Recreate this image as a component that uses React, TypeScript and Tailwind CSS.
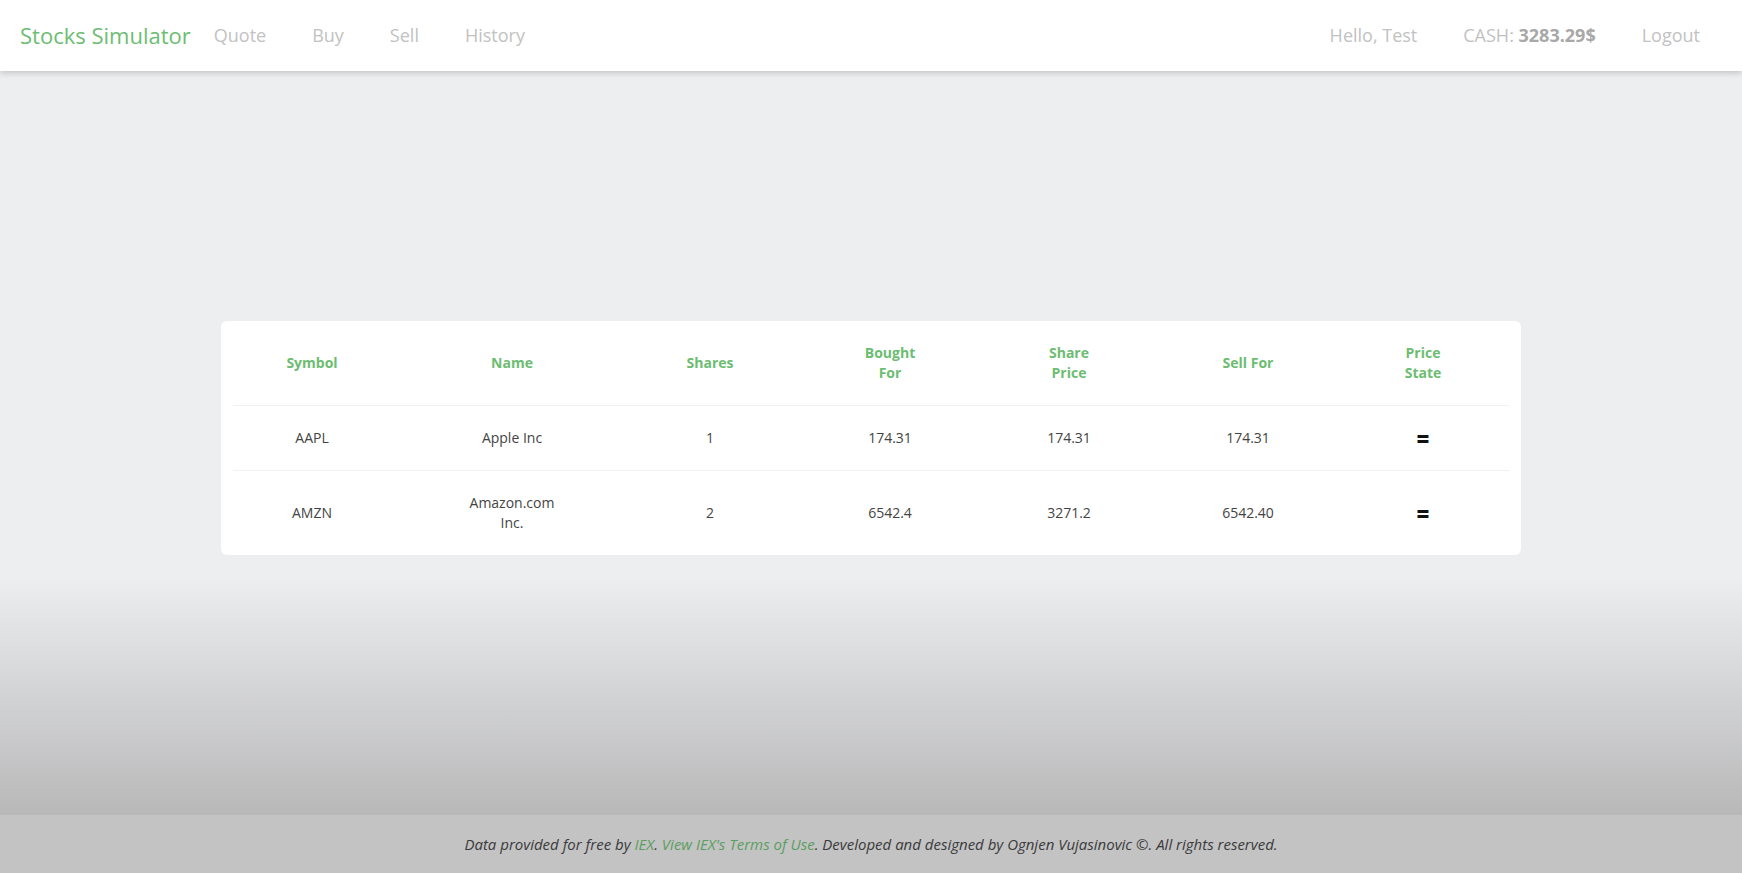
import React from 'react';

const stocks = [
  { symbol: 'AAPL', name: ['Apple Inc'], shares: '1', bought: '174.31', price: '174.31', sell: '174.31' },
  { symbol: 'AMZN', name: ['Amazon.com', 'Inc.'], shares: '2', bought: '6542.4', price: '3271.2', sell: '6542.40' },
];

const cols = ['w-[158px]', 'w-[242px]', 'w-[154px]', 'w-[206px]', 'w-[152px]', 'w-[206px]', 'w-[158px] pr-[14px]'];

export default function App() {
  return (
    <div className="min-h-screen flex flex-col font-['Open_Sans',sans-serif]">
      <header className="h-[71px] bg-white shadow-[0_2px_6px_rgba(0,0,0,0.18)] relative z-10 flex items-center px-5">
        <span className="text-[22px] text-[#6cbd72]">Stocks Simulator</span>
        <nav className="flex items-center text-[18px] text-[#c2c2c2]">
          <a className="px-[23px]">Quote</a>
          <a className="px-[23px]">Buy</a>
          <a className="px-[23px]">Sell</a>
          <a className="px-[23px]">History</a>
        </nav>
        <div className="ml-auto flex items-center text-[18px] text-[#c2c2c2]">
          <span className="px-[23px]">Hello, Test</span>
          <span className="px-[23px]">
            CASH: <b className="font-bold text-[#a8a8a8]">3283.29$</b>
          </span>
          <a className="pl-[23px] pr-[22px]">Logout</a>
        </div>
      </header>

      <main className="flex-1 flex items-center justify-center bg-[linear-gradient(to_bottom,#edeef0_0%,#edeef0_68%,#b8b8b9_100%)]">
        <div className="w-[1300px] bg-white rounded-md px-3 mb-[10px]">
          <table className="w-full text-center text-[14px] leading-5 border-collapse">
            <thead>
              <tr className="border-b border-[#f1f1f1]">
                {['Symbol', 'Name', 'Shares', 'Bought|For', 'Share|Price', 'Sell For', 'Price|State'].map((h, i) => (
                  <th key={h} className={`${cols[i]} h-[84px] font-bold text-[#6cbd72]`}>
                    {h.split('|').map((p) => (
                      <div key={p}>{p}</div>
                    ))}
                  </th>
                ))}
              </tr>
            </thead>
            <tbody className="text-[#444]">
              {stocks.map((s, r) => (
                <tr key={s.symbol} className={r === 0 ? 'border-b border-[#f1f1f1]' : ''}>
                  <td className="py-[22px]">{s.symbol}</td>
                  <td className="py-[22px]">
                    {s.name.map((n) => (
                      <div key={n}>{n}</div>
                    ))}
                  </td>
                  <td className="py-[22px]">{s.shares}</td>
                  <td className="py-[22px]">{s.bought}</td>
                  <td className="py-[22px]">{s.price}</td>
                  <td className="py-[22px]">{s.sell}</td>
                  <td className="py-[22px] pr-[14px] font-extrabold text-[22px] leading-5 text-[#111]">=</td>
                </tr>
              ))}
            </tbody>
          </table>
        </div>
      </main>

      <footer className="h-[58px] bg-[#c3c3c4] flex items-center justify-center text-[15px] italic text-[#3a3a3a]">
        <p>
          Data provided for free by <a className="text-[#5a9e5f]">IEX</a>.{' '}
          <a className="text-[#5a9e5f]">View IEX's Terms of Use</a>. Developed and designed by Ognjen Vujasinovic ©. All
          rights reserved.
        </p>
      </footer>
    </div>
  );
}
